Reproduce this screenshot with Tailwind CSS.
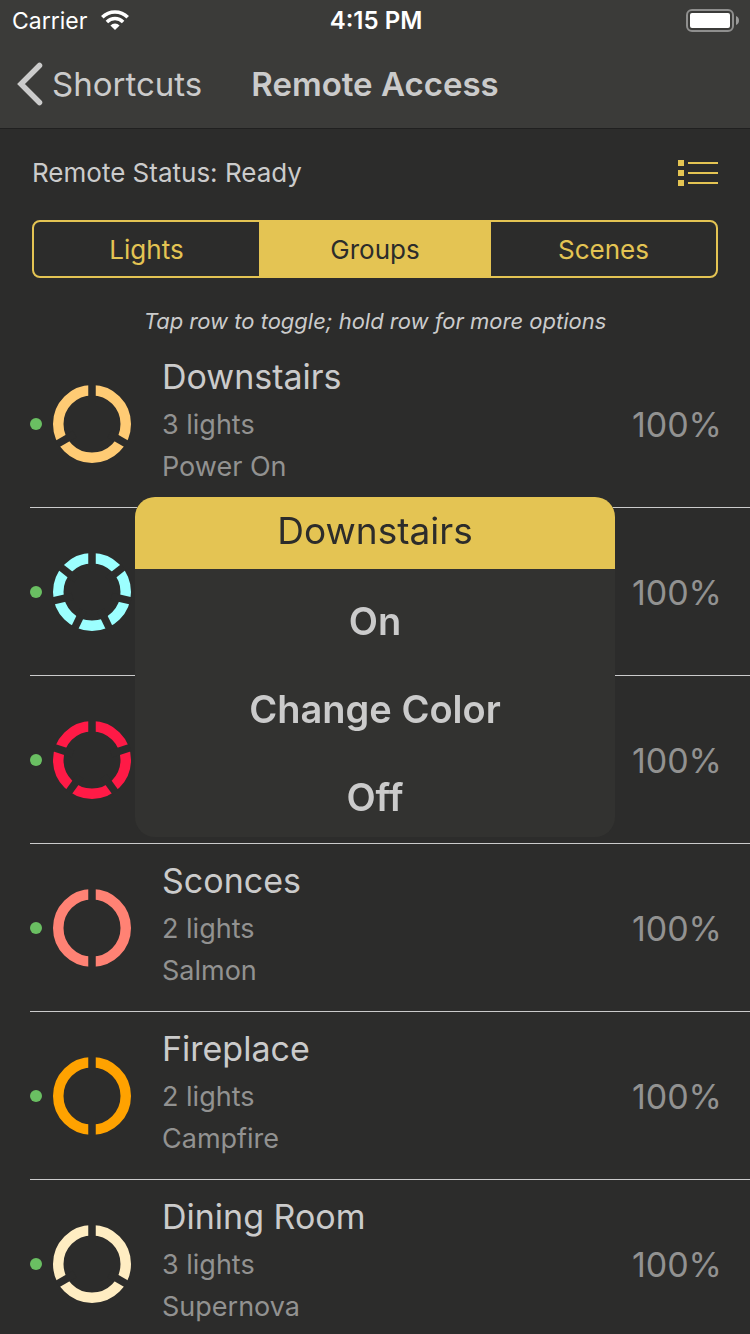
<!DOCTYPE html>
<html lang="en">
<head>
  <meta charset="UTF-8" />
  <meta name="viewport" content="width=device-width, initial-scale=1.0"/>
  <title>Remote Access</title>
  <script src="https://cdn.jsdelivr.net/npm/@tailwindcss/browser@4"></script>
</head>
<body class="relative h-screen overflow-hidden bg-[#2c2c2b] font-['Inter','Liberation_Sans',sans-serif] text-[#cbcbcb]">

  <header class="bg-[#3b3b39] border-b border-[#202020]">
    <!-- status bar -->
    <div class="grid h-[42px] grid-cols-3 items-center pl-3 pr-[10px] text-white">
      <div class="flex items-center gap-[14px]">
        <span class="text-[23px]">Carrier</span>
        <svg class="h-[22px] w-7" viewBox="0 0 28 22" fill="none" stroke="white" aria-label="Wi-Fi">
          <path d="M1.3 7.3a18 18 0 0 1 25.4 0" stroke-width="3.6"/>
          <path d="M5.9 11.9a11.5 11.5 0 0 1 16.2 0" stroke-width="3.5"/>
          <path d="M14 20l-4.6-4.6a6.5 6.5 0 0 1 9.2 0z" fill="white" stroke="none"/>
        </svg>
      </div>
      <span class="text-center text-[24px] font-semibold">4:15 PM</span>
      <svg class="h-[26px] w-[54px] justify-self-end" viewBox="0 0 54 26" aria-label="Battery full">
        <rect x="1" y="2" width="46" height="21" rx="5" fill="none" stroke="#8f8f8e" stroke-width="2"/>
        <rect x="4" y="5" width="40" height="15" rx="2" fill="white"/>
        <path d="M50 8c4 1.5 4 7.500 0 9z" fill="#9b9b9a"/>
      </svg>
    </div>

    <nav class="grid h-[86px] grid-cols-[1fr_auto_1fr] items-center px-4">
      <a href="#" class="flex items-center gap-2 text-[33px]">
        <svg class="h-[46px] w-7" viewBox="0 0 28 46" fill="none" stroke="#cbcbcb" stroke-width="5.5" stroke-linecap="round" aria-hidden="true">
          <path d="M23.5 3.5L5 22l18.500 18.500"/>
        </svg>
        Shortcuts
      </a>
      <h1 class="text-center text-[33px] font-semibold whitespace-nowrap">Remote Access</h1>
    </nav>
  </header>

  <main>
    <div class="px-8">
      <div class="flex h-[91px] items-center justify-between pb-1">
        <p class="text-[26px]">Remote Status: Ready</p>
        <button type="button" aria-label="List view">
          <svg class="h-[26px] w-10" viewBox="0 0 40 26" fill="#e4c453">
            <path d="M0 0h6v6H0zM0 10h6v6H0zM0 20h6v6H0zM10 2h30v2H10zM10 12h30v2H10zM10 22h30v2H10z"/>
          </svg>
        </button>
      </div>

      <div class="grid h-[58px] grid-cols-[1fr_232px_1fr] overflow-hidden rounded-lg border-2 border-[#e4c453] text-[26px] text-[#e4c453]">
        <button type="button" aria-pressed="false">Lights</button>
        <button type="button" aria-pressed="true" class="bg-[#e4c453] text-[#2c2c2b]">Groups</button>
        <button type="button" aria-pressed="false">Scenes</button>
      </div>

      <p class="pt-7 pb-1 text-center text-[22px] leading-[30px] italic">Tap row to toggle; hold row for more options</p>
    </div>

    <ul id="groups"></ul>
  </main>

  <div class="fixed inset-0 flex items-center justify-center">
    <div role="dialog" aria-labelledby="dialogTitle" class="w-[480px] overflow-hidden rounded-[20px] bg-[#323230]">
      <h2 id="dialogTitle" class="h-[72px] bg-[#e4c453] text-center text-[37px] leading-[68px] text-[#2c2c2b]">Downstairs</h2>
      <div class="flex flex-col gap-2 pt-3 text-[38px] font-semibold">
        <button type="button" class="h-20">On</button>
        <button type="button" class="h-20">Change Color</button>
        <button type="button" class="h-20">Off</button>
      </div>
    </div>
  </div>

  <script>
    // rows under the dialog have no visible text
    const groups = [
      { name: 'Downstairs', lights: 3, scene: 'Power On', color: '#ffcb74' },
      { lights: 7, color: '#9cffff' },
      { lights: 5, color: '#ff1a46' },
      { name: 'Sconces', lights: 2, scene: 'Salmon', color: '#ff8274' },
      { name: 'Fireplace', lights: 2, scene: 'Campfire', color: '#ffa200' },
      { name: 'Dining Room', lights: 3, scene: 'Supernova', color: '#ffedc2' },
    ];

    // one arc per light, split by evenly spaced gaps
    function ring(count, color) {
      let gaps = '';
      for (let i = 0; i < count; i++) {
        gaps += `<path d="M40 20V0" transform="rotate(${i * 360 / count} 40 40)"/>`;
      }
      return `
        <svg class="size-20" viewBox="0 0 80 80" fill="none" aria-hidden="true">
          <circle cx="40" cy="40" r="33.75" stroke="${color}" stroke-width="10.5"/>
          <g stroke="#2c2c2b" stroke-width="7.5">${gaps}</g>
        </svg>`;
    }

    document.getElementById('groups').innerHTML = groups.map(g => `
      <li class="ml-[30px] border-b border-[#cbcbcb]">
        <button type="button" class="flex h-[167px] w-full items-center pr-7 text-left">
          <span class="mr-[10px] size-3 rounded-full bg-[#6abf62]"></span>
          ${ring(g.lights, g.color)}
          <span class="ml-[30px] flex-1 self-start pt-[14px] text-[27px] leading-[42px] text-[#929291]">
            ${g.name ? `
            <span class="block pb-1 text-[34px] leading-[46px] text-[#cbcbcb]">${g.name}</span>
            <span class="block">${g.lights} lights</span>
            <span class="block">${g.scene}</span>` : ''}
          </span>
          <span class="pt-[2px] text-[34px] text-[#929291]">100%</span>
        </button>
      </li>`).join('');
  </script>
</body>
</html>
